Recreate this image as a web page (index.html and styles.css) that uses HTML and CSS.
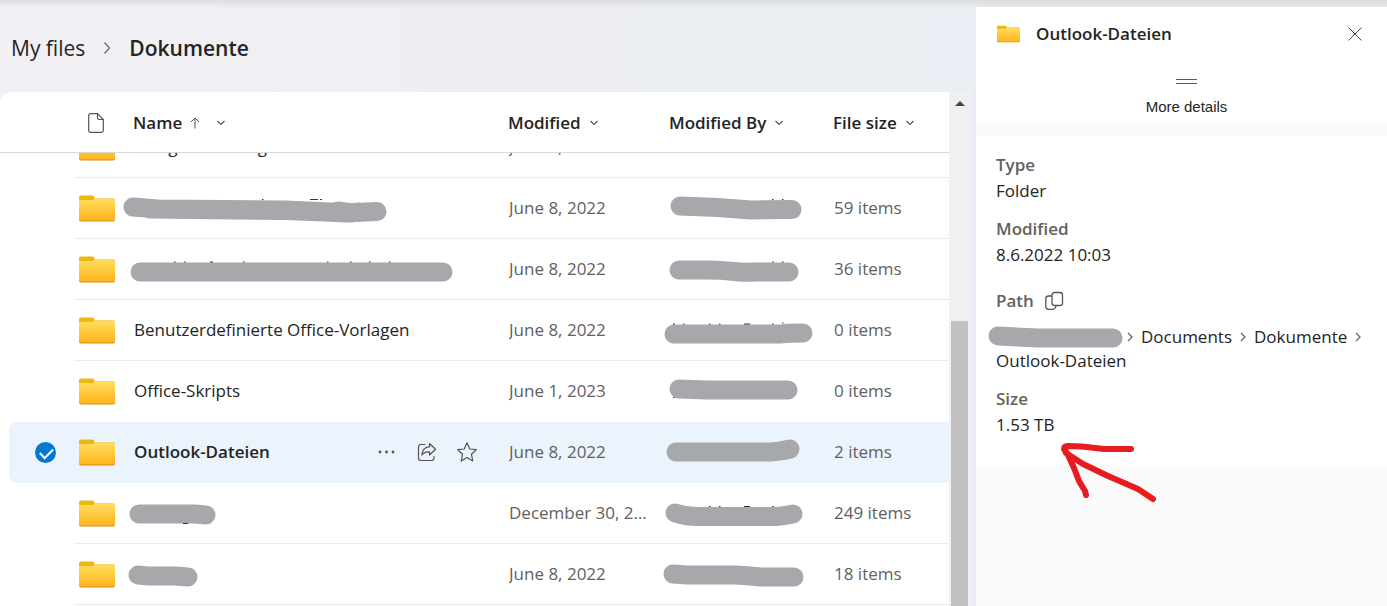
FILE: index.html
```html
<!DOCTYPE html>
<html lang="en">
<head>
    <meta charset="UTF-8">
    <meta name="viewport" content="width=device-width, initial-scale=1">

    <title>Dokumente - My files</title>

    <link rel="stylesheet" href="styles.css">
</head>
<body>
    <!-- shared icons -->
    <svg class="sprite" aria-hidden="true">
        <defs>
            <linearGradient id="folder-fill" x1="0" y1="0" x2="0" y2="1">
                <stop offset="0" stop-color="#ffdf5e"/>
                <stop offset="1" stop-color="#ffb41c"/>
            </linearGradient>
        </defs>
        <symbol id="folder" viewBox="0 0 36 27">
            <path d="M0 2.500Q0 .5 2 .5H13Q15.500 .5 15.500 3V7H0Z" fill="#edb70f"/>
            <path d="M0 5H13.500L16 3.500H34Q36 3.500 36 5.500V24.500Q36 26.500 34 26.500H2Q0 26.500 0 24.500Z" fill="#d98d12"/>
            <path d="M0 5H13.500L16 3.500H34Q36 3.500 36 5.500V23.500Q36 25.500 34 25.500H2Q0 25.500 0 23.500Z" fill="url(#folder-fill)"/>
        </symbol>
        <symbol id="down" viewBox="0 0 10 10">
            <path d="M1.500 3L5 6.500L8.500 3" fill="none" stroke="#555" stroke-width="1.200"/>
        </symbol>
        <symbol id="right" viewBox="0 0 8 14">
            <path d="M1.500 1.500L6.500 7L1.500 12.500" fill="none" stroke="#666" stroke-width="1.200"/>
        </symbol>
        <symbol id="sep" viewBox="0 0 6 10">
            <path d="M1 1L5 5L1 9" fill="none" stroke="#666" stroke-width="1.300"/>
        </symbol>
    </svg>

    <div id="wrap">
        <main class="files">
            <nav class="crumbs">
                <a href="#">My files</a>
                <svg class="crumb-arrow"><use href="#right"/></svg>
                <a href="#" class="current">Dokumente</a>
            </nav>
            <div class="list">
                <table class="grid">
                    <thead>
                        <tr>
                            <th></th>
                            <th class="type">
                                <svg width="16" height="20" viewBox="0 0 16 20" fill="none" stroke="#555" stroke-width="1.200"><path d="M2.500 .7H9.500L15.300 6.500V17.500Q15.300 19.300 13.500 19.300H2.500Q.7 19.300 .7 17.500V2.500Q.7 .7 2.500 .7Z"/><path d="M9.500 .7V5Q9.500 6.500 11 6.500H15.300"/></svg>
                            </th>
                            <th><button class="sort">Name
                                <svg class="up" viewBox="0 0 10 12" fill="none" stroke="#555"><path d="M5 11.500V1M1 5L5 1L9 5"/></svg>
                                <svg class="down"><use href="#down"/></svg></button></th>
                            <th><button class="sort">Modified <svg class="down"><use href="#down"/></svg></button></th>
                            <th><button class="sort">Modified By <svg class="down"><use href="#down"/></svg></button></th>
                            <th><button class="sort">File size <svg class="down"><use href="#down"/></svg></button></th>
                        </tr>
                    </thead>
                    <tbody>
                        <tr class="scrolled">
                            <td></td>
                            <td class="type"><svg class="folder"><use href="#folder"/></svg></td>
                            <td class="name">Design-Grundlagen</td>
                            <td>June 8, 2022</td>
                            <td></td>
                            <td></td>
                        </tr>
                        <tr>
                            <td></td>
                            <td class="type"><svg class="folder"><use href="#folder"/></svg></td>
                            <td class="name"><svg class="mark" width="276" height="30" viewBox="0 0 276 30"><path d="M13 14L38 16L165 17L210 19L225 20M30 16L165 17.500L205 19L225 20L257 18.500"/><path d="M218 18L232 20L238 19"/><path class="ink" d="M190 6.500H198M200 6.500H202M142 6.500H143.500"/></svg></td>
                            <td>June 8, 2022</td>
                            <td><svg class="mark" width="150" height="30" viewBox="0 0 150 30"><path d="M24 13L62 14.500L95 17L136 16.500"/><path class="ink" d="M116 6.500H117.500M126 6.500H127.500"/></svg></td>
                            <td>59 items</td>
                        </tr>
                        <tr>
                            <td></td>
                            <td class="type"><svg class="folder"><use href="#folder"/></svg></td>
                            <td class="name"><svg class="mark" width="340" height="30" viewBox="0 0 340 30"><path d="M20 18H323"/><path class="ink" d="M54 8H55.500M64 8H65.500M90 8H93M123 8H124.500M207 8H208.500M230 8H231.500M249 8H250.500M269 8H270.500"/></svg></td>
                            <td>June 8, 2022</td>
                            <td><svg class="mark" width="150" height="30" viewBox="0 0 150 30"><path d="M23 16H52Q65 16 78 17.500Q85 18.500 100 18H133"/><path class="ink" d="M116 8H117.500M126 8H127.500"/></svg></td>
                            <td>36 items</td>
                        </tr>
                        <tr>
                            <td></td>
                            <td class="type"><svg class="folder"><use href="#folder"/></svg></td>
                            <td class="name">Benutzerdefinierte Office-Vorlagen</td>
                            <td>June 8, 2022</td>
                            <td><svg class="mark" width="160" height="30" viewBox="0 0 160 30"><path d="M18 19H125Q130 18 147 18"/><path class="ink" d="M17 9H19M27 9H28.500M53 9H54.500M63 9H64.500M88 9H94M116 9H117.500M126 8H127.500"/></svg></td>
                            <td>0 items</td>
                        </tr>
                        <tr class="before-selected">
                            <td></td>
                            <td class="type"><svg class="folder"><use href="#folder"/></svg></td>
                            <td class="name">Office-Skripts</td>
                            <td>June 1, 2023</td>
                            <td><svg class="mark" width="150" height="30" viewBox="0 0 150 30"><path d="M23 13L50 14H132"/><path class="ink" d="M17 21.500H18.500"/></svg></td>
                            <td>0 items</td>
                        </tr>
                        <tr class="selected">
                            <td class="pick"><input type="checkbox" checked aria-label="Select Outlook-Dateien"></td>
                            <td class="type"><svg class="folder"><use href="#folder"/></svg></td>
                            <td class="name">
                                <a href="#">Outlook-Dateien</a>
                                <span class="actions">
                                    <button aria-label="More actions"><svg width="20" height="20" viewBox="0 0 20 20" fill="#555"><circle cx="3" cy="10" r="1.400"/><circle cx="9.500" cy="10" r="1.400"/><circle cx="16" cy="10" r="1.400"/></svg></button>
                                    <button aria-label="Share"><svg width="20" height="20" viewBox="0 0 20 20" fill="none" stroke="#555" stroke-width="1.200" stroke-linejoin="round" stroke-linecap="round"><path d="M8 2.500H4Q1.500 2.500 1.500 5V16Q1.500 18.500 4 18.500H14.500Q17 18.500 17 16V14.500"/><path d="M12.500 1.500L18.500 7.200L12.500 13V9.800Q7.500 9.500 4.800 13Q5.500 5.500 12.500 4.700Z"/></svg></button>
                                    <button aria-label="Favorite"><svg width="20" height="20" viewBox="0 0 20 20" fill="none" stroke="#555" stroke-width="1.200" stroke-linejoin="round"><path d="M10 .8L12.800 7L19.300 7.700L14.400 12.200L15.800 19L10 15.600L4.200 19L5.600 12.200L.7 7.700L7.200 7Z"/></svg></button>
                                </span>
                            </td>
                            <td>June 8, 2022</td>
                            <td><svg class="mark" width="150" height="30" viewBox="0 0 150 30"><path d="M20 15H115Q125 14.500 134 12"/></svg></td>
                            <td>2 items</td>
                        </tr>
                        <tr>
                            <td></td>
                            <td class="type"><svg class="folder"><use href="#folder"/></svg></td>
                            <td class="name"><svg class="mark" width="110" height="30" viewBox="0 0 110 30"><path d="M19 16H75L86 17"/><path class="ink" d="M63 25.500H68"/></svg></td>
                            <td>December 30, 2022</td>
                            <td><svg class="mark" width="150" height="30" viewBox="0 0 150 30"><path d="M19 15Q30 18.500 41 18.500H120Q128 18 137 16"/><path class="ink" d="M53 8.500H54.500M63 8.500H64.500M88 8.500H94M116 8.500H117.500"/></svg></td>
                            <td>249 items</td>
                        </tr>
                        <tr>
                            <td></td>
                            <td class="type"><svg class="folder"><use href="#folder"/></svg></td>
                            <td class="name"><svg class="mark" width="110" height="30" viewBox="0 0 110 30"><path d="M18 16L28 17H55L68 18"/></svg></td>
                            <td>June 8, 2022</td>
                            <td><svg class="mark" width="150" height="30" viewBox="0 0 150 30"><path d="M17 15L32 16H80Q95 17 105 18H138"/></svg></td>
                            <td>18 items</td>
                        </tr>
                    </tbody>
                </table>
                <div class="scrollbar">
                    <div class="scroll-up"></div>
                    <div class="thumb"></div>
                </div>
            </div>
        </main>

        <aside class="panel">
            <header class="panel-head">
                <div class="panel-title">
                    <svg class="folder"><use href="#folder"/></svg>
                    <h2>Outlook-Dateien</h2>
                    <button class="close" aria-label="Close"><svg width="16" height="16" viewBox="0 0 16 16" stroke="#444"><path d="M1.500 1.500L14.500 14.500M14.500 1.500L1.500 14.500"/></svg></button>
                </div>
                <button class="more"><span class="handle"></span>More details</button>
            </header>
            <section class="details">
                <h3>Type</h3>
                <p>Folder</p>
                <h3>Modified</h3>
                <p>8.6.2022 10:03</p>
                <h3 class="path-label">Path
                    <button aria-label="Copy path"><svg width="20" height="20" viewBox="0 0 20 20" fill="none" stroke="#555" stroke-width="1.300"><rect x="8" y="1.500" width="10.500" height="13" rx="2.500"/><path d="M8 5H4.500Q1.800 5 1.800 7.700V15.500Q1.800 18.300 4.500 18.300H9Q11.500 18.300 12 14.500"/></svg></button>
                </h3>
                <div class="path">
                    <svg class="owner" width="135" height="24" viewBox="0 0 135 24"><path d="M10 11L50 13H125"/></svg>
                    <svg class="sep"><use href="#sep"/></svg>
                    <a href="#">Documents</a>
                    <svg class="sep"><use href="#sep"/></svg>
                    <a href="#">Dokumente</a>
                    <svg class="sep"><use href="#sep"/></svg>
                    <a href="#">Outlook-Dateien</a>
                </div>
                <h3>Size</h3>
                <p>1.53 TB</p>
                <svg class="pointer" width="100" height="64" viewBox="0 0 100 64"><path d="M73 7H46L24 4.500L10 4Q6 4 6 7L10 13L16 26L21 39L27 49L28 53M8 11L25 22L50 34L80 47L95 57"/></svg>
            </section>
        </aside>
    </div>
</body>
</html>
```
FILE: styles.css
```css
*{
    box-sizing: border-box;
}
html,body{
    height: 100%;
    margin: 0;
}
body{
    overflow: hidden;
    font: 17px/24px "Segoe UI","Open Sans",sans-serif;
    color: #242424;
    background: linear-gradient(#dcdce0,rgba(236,238,243,0) 8px),linear-gradient(90deg,#f2f0f4,#eceef3 45%,#e9eff4 70%,#e9eaed 71%);
}
a{
    color: inherit;
    text-decoration: none;
}
button{
    padding: 0;
    border: 0;
    font: inherit;
    color: inherit;
    background: none;
    cursor: pointer;
}
svg{
    display: block;
    flex: none;
}
.sprite{
    position: absolute;
    width: 0;
    height: 0;
}
#wrap{
    display: flex;
    gap: 6px;
    height: 100%;
}

/* file list */
.files{
    display: flex;
    flex: 1;
    flex-direction: column;
    min-width: 0;
}
.crumbs{
    display: flex;
    flex: none;
    align-items: center;
    gap: 18px;
    height: 92px;
    padding: 4px 11px 0;
    font-size: 21px;
}
.crumbs .current{
    font-weight: 600;
}
.crumb-arrow{
    width: 8px;
    height: 14px;
}
.list{
    display: flex;
    flex: 1;
    min-height: 0;
}
.grid{
    display: flex;
    flex: 1;
    flex-direction: column;
    min-width: 0;
    overflow: hidden;
    border-top-left-radius: 12px;
    background: #fff;
}
.grid thead,
.grid tbody{
    display: block;
    padding-left: 9px;
}
.grid thead{
    flex: none;
    border-bottom: 1px solid #d9d9d9;
}
.grid tbody{
    flex: 1;
    min-height: 0;
    overflow: hidden;
}
.grid tr{
    display: grid;
    grid-template-columns: 65px 60px minmax(0,1fr) 161px 164px 115px;
    height: 61px;
}
.grid thead tr{
    height: 60px;
    padding-top: 2px;
}
.grid th,
.grid td{
    display: flex;
    align-items: center;
    padding: 0;
    white-space: nowrap;
}
.grid th{
    margin-left: -1px;
    font-weight: 600;
}
.grid td{
    border-bottom: 1px solid #ebebeb;
    color: #616161;
}
.grid td:first-child,
.grid .before-selected td,
.grid .selected td{
    border-bottom-color: transparent;
}
.grid td.name{
    color: #242424;
}
.grid td:nth-child(4){
    display: block;
    padding-right: 16px;
    overflow: hidden;
    line-height: 60px;
    text-overflow: ellipsis;
}
.grid .scrolled{
    margin-top: -36px;
}
.grid .type{
    padding-left: 5px;
}
.grid th.type{
    padding-left: 15px;
}
.folder{
    width: 36px;
    height: 27px;
}
.sort{
    display: flex;
    align-items: center;
    gap: 8px;
}
.up{
    width: 10px;
    height: 12px;
}
.down{
    width: 10px;
    height: 10px;
}
.up + .down{
    margin-left: 8px;
}
.grid .selected{
    border-radius: 8px 0 0 8px;
    background: #ebf3fc;
}
.selected .name{
    justify-content: space-between;
    font-weight: 600;
}
.grid .pick{
    padding-left: 26px;
}
.pick input{
    width: 21px;
    height: 21px;
    margin: 0;
    border-radius: 50%;
    appearance: none;
    background: #0078d4;
}
.pick input:checked::before{
    content: "";
    display: block;
    width: 11px;
    height: 6px;
    margin: 6px 0 0 5px;
    border: solid #fff;
    border-width: 0 0 2px 2px;
    transform: rotate(-45deg);
}
.actions{
    display: flex;
    gap: 20px;
    padding-right: 32px;
}
.mark{
    margin-left: -14px;
}
.mark path,
.owner path{
    fill: none;
    stroke: #a7a8ac;
    stroke-width: 19px;
    stroke-linecap: round;
    stroke-linejoin: round;
}
.mark .ink{
    stroke: #333;
    stroke-width: 1px;
    stroke-linecap: butt;
}

/* scrollbar */
.scrollbar{
    display: flex;
    flex-direction: column;
    align-items: center;
    width: 21px;
    background: #f0f0f0;
}
.scroll-up{
    margin-top: 9px;
    border: 5px solid transparent;
    border-top-width: 0;
    border-bottom-color: #444;
}
.thumb{
    flex: 1;
    width: 17px;
    margin-top: 215px;
    background: #c1c1c1;
}

/* details panel */
.panel{
    flex: none;
    width: 411px;
    margin-top: 7px;
    background: #fafafa;
}
.panel-head{
    margin-bottom: 15px;
    background: #fff;
}
.panel-title{
    display: flex;
    align-items: center;
    height: 54px;
    padding: 0 24px 0 21px;
}
.panel-title .folder{
    width: 23px;
    height: 18px;
}
.panel-title h2{
    flex: 1;
    margin: 0 0 0 16px;
    font-size: 17px;
    font-weight: 600;
}
.more{
    display: flex;
    flex-direction: column;
    align-items: center;
    gap: 11px;
    width: 100%;
    height: 60px;
    padding: 18px 0 0 10px;
    font: 15px/24px "Liberation Sans",Arial,sans-serif;
}
.handle{
    width: 21px;
    height: 5px;
    border-top: 1px solid #0f6fae;
    border-bottom: 1px solid #0f6fae;
}
.details{
    position: relative;
    padding: 17px 20px 28px;
    background: #fff;
}
.details h3{
    margin: 14px 0 2px;
    font-size: 17px;
    line-height: 24px;
    font-weight: 600;
    color: #616161;
}
.details h3:first-child{
    margin-top: 0;
}
.details p{
    margin: 0;
}
.details .path-label{
    display: flex;
    align-items: center;
    gap: 10px;
    margin: 22px 0 12px;
}
.path{
    display: flex;
    flex-wrap: wrap;
    align-items: center;
    column-gap: 8px;
}
.owner{
    margin-left: -8px;
}
.owner + .sep{
    margin-left: -4px;
}
.sep{
    width: 6px;
    height: 10px;
}
/* hand-drawn arrow over the size value */
.pointer{
    position: absolute;
    top: 306px;
    left: 82px;
}
.pointer path{
    fill: none;
    stroke: #e81c1f;
    stroke-width: 6px;
    stroke-linecap: round;
    stroke-linejoin: round;
}
```
